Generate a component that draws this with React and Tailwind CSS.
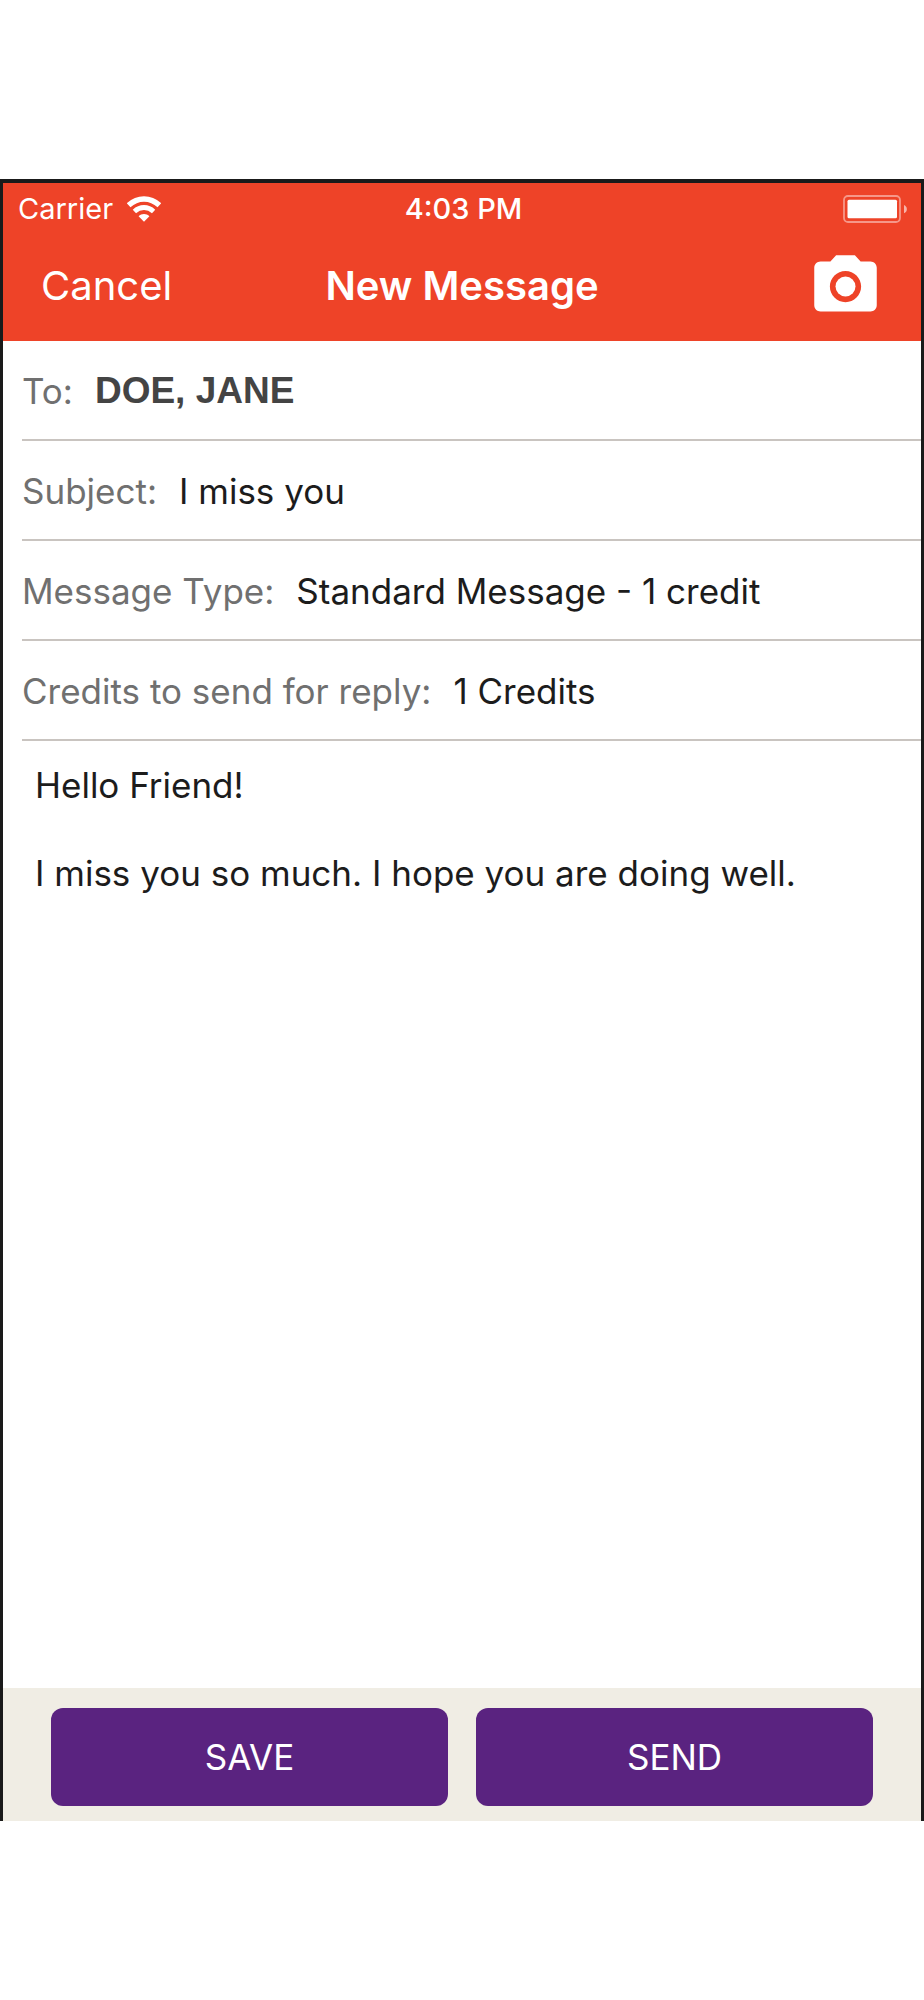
import { useState } from "react";
import { MdCameraAlt } from "react-icons/md";

const WifiIcon = () => (
  <svg viewBox="0 0 34 26" className="w-[34px] h-[26px]" fill="none" aria-hidden="true">
    <path d="M1.600 9.300C10.500 0.800 23.500 0.800 32.400 9.300" stroke="white" strokeWidth="5.400" />
    <path d="M7.400 15.400C13 10.200 21 10.200 26.600 15.400" stroke="white" strokeWidth="4.800" />
    <path d="M17 25.800L11.600 20.300C14.500 17.200 19.500 17.200 22.400 20.300Z" fill="white" />
  </svg>
);

const BatteryIcon = () => (
  <svg viewBox="0 0 66 28" className="w-[66px] h-7" aria-hidden="true">
    <rect x="1" y="1" width="56" height="26" rx="4" fill="none" stroke="white" strokeOpacity="0.45" strokeWidth="1.800" />
    <rect x="4.500" y="4.700" width="49.500" height="18.600" rx="1.500" fill="white" />
    <path d="M61 10C64.800 11.300 64.800 17 61 18.300Z" fill="white" fillOpacity="0.6" />
  </svg>
);

const StatusBar = () => (
  <div className="grid grid-cols-[1fr_auto_1fr] items-center h-[52px] pl-[15px] pr-3 text-[29px] leading-9">
    <div className="flex items-center gap-[14px]">
      <span>Carrier</span>
      <WifiIcon />
    </div>
    <span className="font-medium">4:03 PM</span>
    <div className="flex justify-end">
      <BatteryIcon />
    </div>
  </div>
);

const NavBar = () => (
  <div className="grid grid-cols-[1fr_auto_1fr] items-center h-[106px] pb-1 px-[38px] text-[40px] leading-[48px]">
    <button type="button" className="justify-self-start">
      Cancel
    </button>
    <h1 className="font-semibold">New Message</h1>
    <button type="button" aria-label="Attach photo" className="justify-self-end">
      <MdCameraAlt className="size-[75px]" />
    </button>
  </div>
);

const Field = ({ id, label, children }) => (
  <div className="flex items-center gap-[22px] h-[100px] pt-px border-b-2 border-[#c9c4c0]">
    <label htmlFor={id} className="shrink-0 text-[#707070]">
      {label}
    </label>
    {children}
  </div>
);

const App = () => {
  const [to, setTo] = useState("DOE, JANE");
  const [subject, setSubject] = useState("I miss you");
  const [body, setBody] = useState(
    "Hello Friend!\n\nI miss you so much. I hope you are doing well."
  );

  return (
    <div className="bg-white py-[179px] font-['Inter',sans-serif]">
      <form
        className="border-x-3 border-t-4 border-[#1a1a1a] text-[35px] leading-[44px] text-[#1c1c1c]"
        onSubmit={(e) => e.preventDefault()}
      >
        <header className="bg-[#ee4328] text-white">
          <StatusBar />
          <NavBar />
        </header>

        <div className="pl-[19px]">
          <Field id="to" label="To:">
            <input
              id="to"
              type="text"
              value={to}
              onChange={(e) => setTo(e.target.value)}
              className="min-w-0 flex-1 outline-none font-['Liberation_Sans',sans-serif] text-[37px] font-bold text-[#444444]"
            />
          </Field>
          <Field id="subject" label="Subject:">
            <input
              id="subject"
              type="text"
              value={subject}
              onChange={(e) => setSubject(e.target.value)}
              className="min-w-0 flex-1 outline-none"
            />
          </Field>
          <Field id="type" label="Message Type:">
            <select id="type" className="min-w-0 flex-1 appearance-none outline-none">
              <option>Standard Message - 1 credit</option>
            </select>
          </Field>
          <Field id="credits" label="Credits to send for reply:">
            <select id="credits" className="min-w-0 flex-1 appearance-none outline-none">
              <option>1 Credits</option>
            </select>
          </Field>
        </div>

        <textarea
          aria-label="Message"
          rows={21}
          value={body}
          onChange={(e) => setBody(e.target.value)}
          className="block w-full resize-none outline-none pt-[22px] pb-px px-8"
        />

        <footer className="grid grid-cols-2 gap-7 bg-[#f0ede4] pt-5 pb-[15px] px-12 text-white">
          <button type="button" className="h-[98px] rounded-xl bg-[#5a2380]">
            SAVE
          </button>
          <button type="submit" className="h-[98px] rounded-xl bg-[#5a2380]">
            SEND
          </button>
        </footer>
      </form>
    </div>
  );
};

export default App;
